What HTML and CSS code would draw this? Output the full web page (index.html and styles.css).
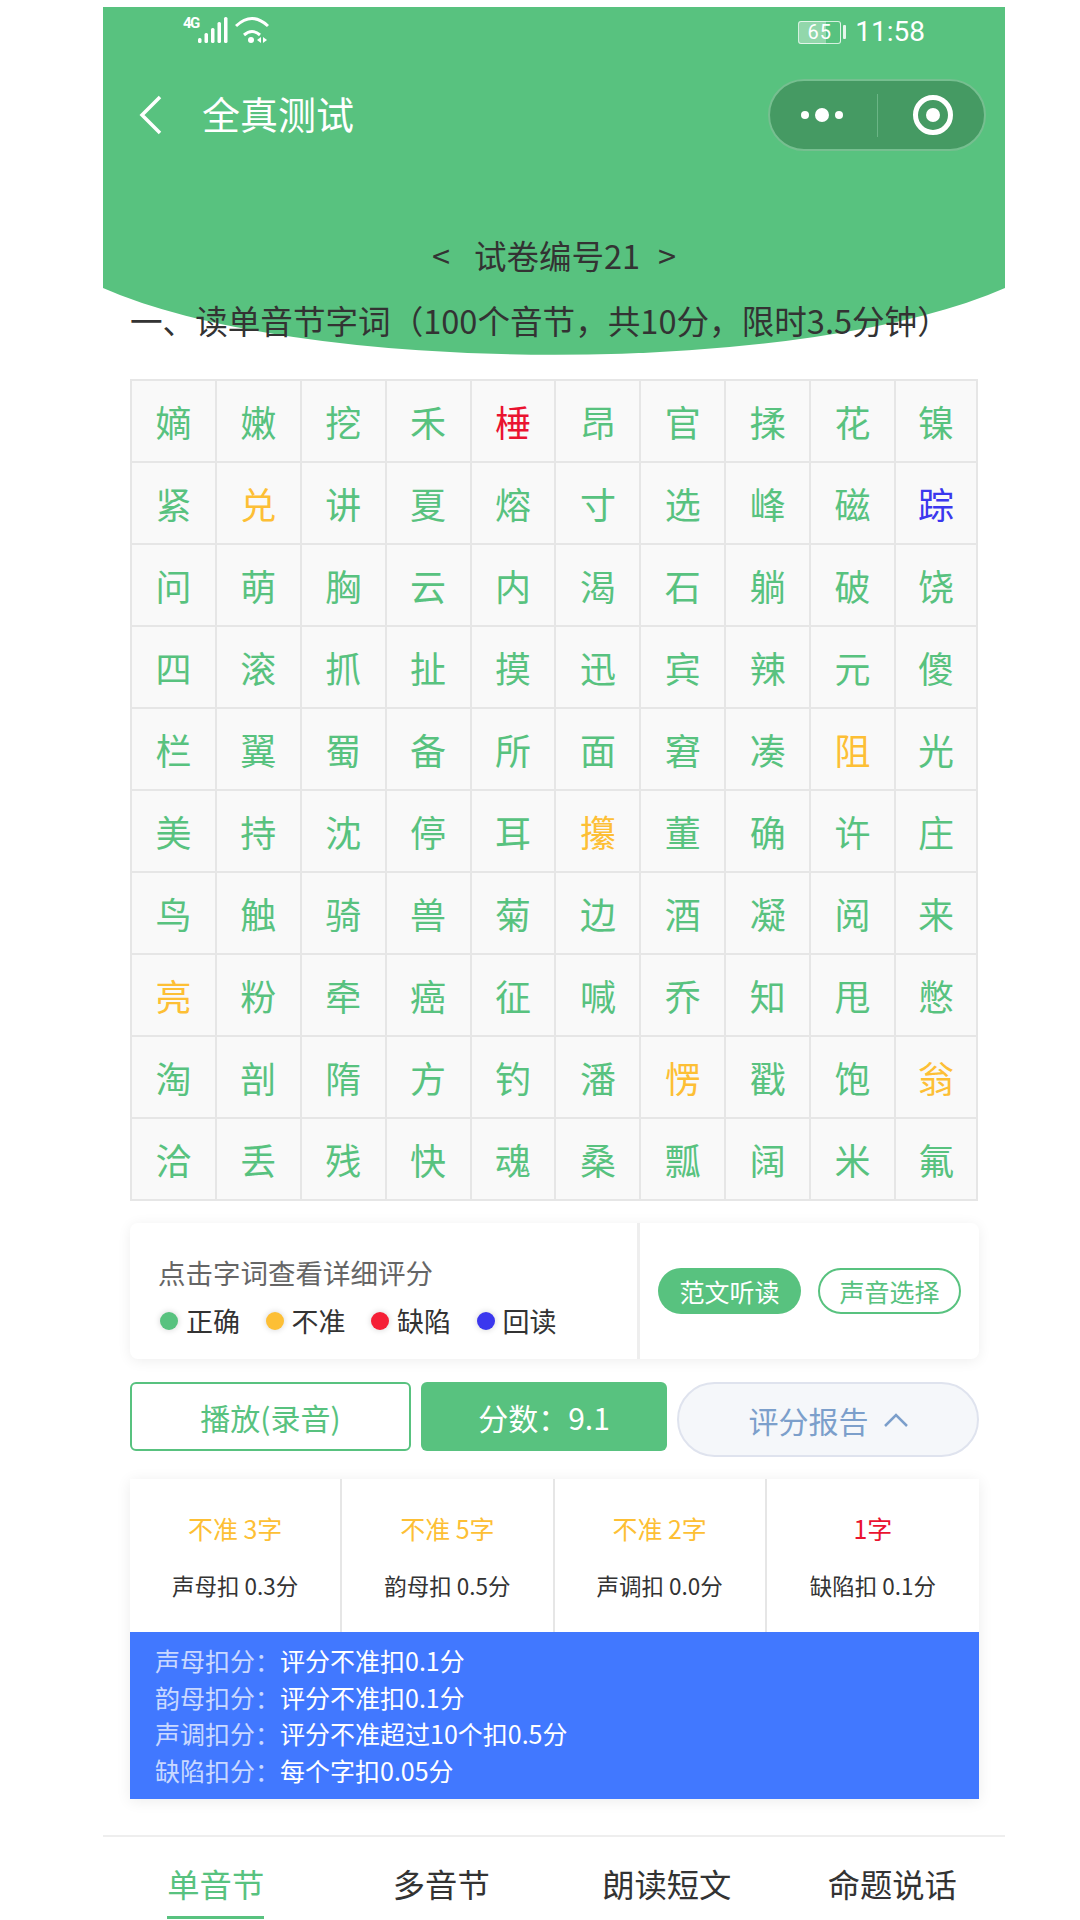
FILE: index.html
```html
<!DOCTYPE html>
<html lang="zh-CN">
<head>
    <meta charset="UTF-8">
    <meta name="viewport" content="width=device-width, initial-scale=1.0">
    <title>全真测试</title>
    <link rel="stylesheet" href="styles.css">
</head>
<body>
<div class="phone">
    <header class="header">
        <div class="status">
            <div class="status-left">
                <span class="net">4G</span>
                <svg class="signal" width="31" height="28" viewBox="0 0 31 28" fill="#fff">
                    <rect x="0" y="22" width="3.5" height="5" rx="1.5"/>
                    <rect x="6.5" y="17" width="3.5" height="10" rx="1.5"/>
                    <rect x="13" y="12" width="3.5" height="15" rx="1.5"/>
                    <rect x="19.5" y="6" width="3.5" height="21" rx="1.5"/>
                    <rect x="26" y="1" width="3.5" height="26" rx="1.5"/>
                </svg>
                <svg class="wifi" width="34" height="28" viewBox="0 0 34 28" fill="none" stroke="#fff" stroke-width="3">
                    <path d="M1 10Q17 -5 33 10"/>
                    <path d="M9 19Q17 12 25 19"/>
                    <circle cx="16" cy="24" r="3" fill="#fff" stroke="none"/>
                    <polygon points="26,21 26,27 22,24" fill="#fff" stroke="none"/>
                    <polygon points="28,21 32,24 28,27" fill="#fff" stroke="none"/>
                </svg>
            </div>
            <div class="status-right">
                <span class="battery">65</span>
                <span class="battery-cap"></span>
                <span class="time">11:58</span>
            </div>
        </div>
        <div class="nav">
            <svg class="back" width="24" height="40" viewBox="0 0 24 40" fill="none" stroke="#fff" stroke-width="3.5">
                <polyline points="21,2 3,20 21,38"/>
            </svg>
            <span class="nav-title">全真测试</span>
            <div class="capsule">
                <svg width="214" height="68" viewBox="0 0 214 68">
                    <circle cx="35" cy="34" r="4" fill="#fff"/>
                    <circle cx="52" cy="34" r="7" fill="#fff"/>
                    <circle cx="69" cy="34" r="4" fill="#fff"/>
                    <rect x="107" y="13" width="1" height="43" fill="#6bb586"/>
                    <circle cx="163" cy="34" r="17.5" fill="none" stroke="#fff" stroke-width="5"/>
                    <circle cx="163" cy="34" r="7" fill="#fff"/>
                </svg>
            </div>
        </div>
        <div class="paper">
            <span>&lt;</span>
            <span>试卷编号21</span>
            <span>&gt;</span>
        </div>
    </header>

    <main class="content">
        <h2 class="section-title">一、读单音节字词（100个音节，共10分，限时3.5分钟）</h2>

        <div class="chars">
            <span>嫡</span><span>嫩</span><span>挖</span><span>禾</span><span class="red">棰</span><span>昂</span><span>官</span><span>揉</span><span>花</span><span>镍</span>
            <span>紧</span><span class="yellow">兑</span><span>讲</span><span>夏</span><span>熔</span><span>寸</span><span>选</span><span>峰</span><span>磁</span><span class="blue">踪</span>
            <span>问</span><span>萌</span><span>胸</span><span>云</span><span>内</span><span>渴</span><span>石</span><span>躺</span><span>破</span><span>饶</span>
            <span>四</span><span>滚</span><span>抓</span><span>扯</span><span>摸</span><span>迅</span><span>宾</span><span>辣</span><span>元</span><span>傻</span>
            <span>栏</span><span>翼</span><span>蜀</span><span>备</span><span>所</span><span>面</span><span>窘</span><span>凑</span><span class="yellow">阻</span><span>光</span>
            <span>美</span><span>持</span><span>沈</span><span>停</span><span>耳</span><span class="yellow">攥</span><span>董</span><span>确</span><span>许</span><span>庄</span>
            <span>鸟</span><span>触</span><span>骑</span><span>兽</span><span>菊</span><span>边</span><span>酒</span><span>凝</span><span>阅</span><span>来</span>
            <span class="yellow">亮</span><span>粉</span><span>牵</span><span>癌</span><span>征</span><span>喊</span><span>乔</span><span>知</span><span>甩</span><span>憋</span>
            <span>淘</span><span>剖</span><span>隋</span><span>方</span><span>钓</span><span>潘</span><span class="yellow">愣</span><span>戳</span><span>饱</span><span class="yellow">翁</span>
            <span>洽</span><span>丢</span><span>残</span><span>快</span><span>魂</span><span>桑</span><span>瓢</span><span>阔</span><span>米</span><span>氟</span>
        </div>

        <div class="legend-card">
            <div class="legend-left">
                <p class="hint">点击字词查看详细评分</p>
                <div class="legend">
                    <span class="legend-item"><i class="dot dot-green"></i>正确</span>
                    <span class="legend-item"><i class="dot dot-yellow"></i>不准</span>
                    <span class="legend-item"><i class="dot dot-red"></i>缺陷</span>
                    <span class="legend-item"><i class="dot dot-blue"></i>回读</span>
                </div>
            </div>
            <div class="legend-right">
                <span class="pill pill-solid">范文听读</span>
                <span class="pill pill-line">声音选择</span>
            </div>
        </div>

        <div class="actions">
            <div class="btn btn-play">播放(录音)</div>
            <div class="btn btn-score">分数：9.1</div>
            <div class="btn btn-report">
                评分报告
                <svg width="24" height="14" viewBox="0 0 24 14" fill="none" stroke="#7c9fcb" stroke-width="2.5">
                    <polyline points="1,13 12,2 23,13"/>
                </svg>
            </div>
        </div>

        <div class="report">
            <div class="report-grid">
                <div class="report-cell"><p class="yellow">不准 3字</p><p>声母扣 0.3分</p></div>
                <div class="report-cell"><p class="yellow">不准 5字</p><p>韵母扣 0.5分</p></div>
                <div class="report-cell"><p class="yellow">不准 2字</p><p>声调扣 0.0分</p></div>
                <div class="report-cell"><p class="red">1字</p><p>缺陷扣 0.1分</p></div>
            </div>
            <div class="rules">
                <p><span>声母扣分：</span>评分不准扣0.1分</p>
                <p><span>韵母扣分：</span>评分不准扣0.1分</p>
                <p><span>声调扣分：</span>评分不准超过10个扣0.5分</p>
                <p><span>缺陷扣分：</span>每个字扣0.05分</p>
            </div>
        </div>
    </main>

    <nav class="tabs">
        <div class="tab"><span class="tab-active">单音节</span></div>
        <div class="tab"><span>多音节</span></div>
        <div class="tab"><span>朗读短文</span></div>
        <div class="tab"><span>命题说话</span></div>
    </nav>
</div>
</body>
</html>
```

FILE: styles.css
```css
* { box-sizing: border-box; }
html, body { margin: 0; padding: 0; }
body { height: 1920px; overflow: hidden; background: #fff; color: #333; font-family: "Noto Sans CJK SC", "Noto Sans", sans-serif; }
p, h2 { margin: 0; font-weight: 400; }
i { font-style: normal; }

.phone { width: 902px; margin: 7px 0 0 103px; }

/* green header, bottom edge is one shallow arc */
.header { height: 348px; background: #58c27f; clip-path: path("M0 0H902V281A520 133 0 0 1 0 281Z"); }

.status { height: 72px; padding: 8px 80px 0 80px; display: flex; justify-content: space-between; align-items: flex-start; color: #fff; }
.status-left { display: flex; align-items: flex-start; }
.net { width: 15px; font-family: "Roboto", sans-serif; font-size: 15px; font-weight: 700; line-height: 15px; letter-spacing: -1.5px; margin-top: 1px; }
.signal { margin-top: 1px; }
.wifi { margin: 1px 0 0 6px; }
.status-right { display: flex; align-items: center; height: 34px; }
.battery { width: 43px; height: 23px; border: 1.5px solid rgba(255, 255, 255, .75); border-radius: 3px; background: linear-gradient(90deg, rgba(255, 255, 255, .35) 65%, transparent 65%); font-family: "Roboto", sans-serif; font-size: 20px; line-height: 20px; text-align: center; letter-spacing: 1px; }
.battery-cap { width: 3px; height: 14px; margin: 0 9px 0 2px; background: rgba(255, 255, 255, .85); border-radius: 1px; }
.time { font-family: "Roboto", sans-serif; font-size: 28px; line-height: 34px; }

.nav { height: 72px; padding: 0 19px 0 36px; display: flex; align-items: center; color: #fff; }
.back { flex: none; }
.nav-title { margin-left: 39px; padding-bottom: 4px; font-size: 38px; line-height: 50px; flex: 1; }
.capsule { width: 218px; height: 72px; border-radius: 36px; background: #459a63; border: 2px solid #76bf90; }
.capsule svg { display: block; }

.paper { margin-top: 82px; height: 44px; display: flex; justify-content: center; align-items: center; gap: 18px; font-size: 32.5px; line-height: 44px; color: #333; }
.paper span:first-child { margin-right: 6px; }

.content { padding: 0 26px 0 27px; }
.section-title { position: relative; margin-top: -55px; font-size: 32.6px; line-height: 40px; color: #333; white-space: nowrap; }

.chars { margin: 39px 1px 0 0; padding: 2px; display: grid; grid-template-columns: repeat(9, 82.9px) 1fr; grid-auto-rows: 80px; gap: 2px; background: #e6e6e6; }
.chars span { display: flex; align-items: center; justify-content: center; background: #f9f9f9; color: #58c27f; font-size: 36px; line-height: 40px; }
.chars .yellow, .yellow { color: #fdbf35; }
.chars .red, .red { color: #ea1330; }
.chars .blue { color: #3b37ee; }

.legend-card { margin-top: 22px; height: 136px; display: flex; background: #fff; border-radius: 8px; box-shadow: 0 2px 14px rgba(0, 0, 0, .07); }
.legend-left { width: 510px; padding: 29px 0 0 28px; border-right: 3px solid #eee; }
.hint { font-size: 27.5px; line-height: 40px; color: #666; }
.legend { margin-top: 9px; display: flex; }
.legend-item { width: 105.5px; display: flex; align-items: center; font-size: 27px; line-height: 40px; color: #333; }
.dot { width: 18px; height: 18px; margin: 0 8px 0 2px; border-radius: 50%; box-shadow: 0 0 6px rgba(0, 0, 0, .18); }
.dot-green { background: #58c27f; }
.dot-yellow { background: #fdbf35; }
.dot-red { background: #f51f36; }
.dot-blue { background: #3b37ee; }
.legend-right { flex: 1; display: flex; align-items: center; gap: 17px; padding-left: 18px; }
.pill { flex: none; width: 143px; height: 46px; border-radius: 23px; display: flex; align-items: center; justify-content: center; font-size: 25px; }
.pill-solid { background: #58c27f; color: #fff; }
.pill-line { border: 2px solid #58c27f; color: #58c27f; }

.actions { margin-top: 23px; display: flex; align-items: flex-start; }
.btn { height: 69px; display: flex; align-items: center; justify-content: center; font-size: 30px; border-radius: 6px; }
.btn-play { width: 281px; border: 2px solid #58c27f; color: #58c27f; }
.btn-score { width: 246px; margin-left: 10px; background: #58c27f; color: #fff; }
.btn-report { width: 302px; height: 75px; margin-left: 10px; gap: 15px; border: 2px solid #dfe3ee; border-radius: 38px; background: #f5f7fa; color: #7c9fcb; }

.report { margin-top: 22px; box-shadow: 0 2px 14px rgba(0, 0, 0, .08); }
.report-grid { height: 153px; display: grid; grid-template-columns: repeat(4, 1fr); background: #fff; }
.report-cell { padding-top: 32px; border-right: 2px solid #e6e6e6; text-align: center; font-size: 22.5px; line-height: 34px; color: #333; }
.report-cell:last-child { border-right: 0; }
.report-cell p:first-child { margin-bottom: 23px; font-size: 25px; }
.rules { height: 167px; padding: 10px 25px; background: #4178ff; color: #fff; font-size: 25px; line-height: 36.7px; }
.rules span { color: #c9d8ff; }

.tabs { margin-top: 36px; height: 85px; padding-top: 24px; display: grid; grid-template-columns: repeat(4, 1fr); border-top: 2px solid #eee; text-align: center; }
.tab span { display: inline-block; padding-bottom: 11px; font-size: 32.3px; line-height: 44px; color: #333; }
.tab .tab-active { color: #58c27f; border-bottom: 3px solid #58c27f; }
```
